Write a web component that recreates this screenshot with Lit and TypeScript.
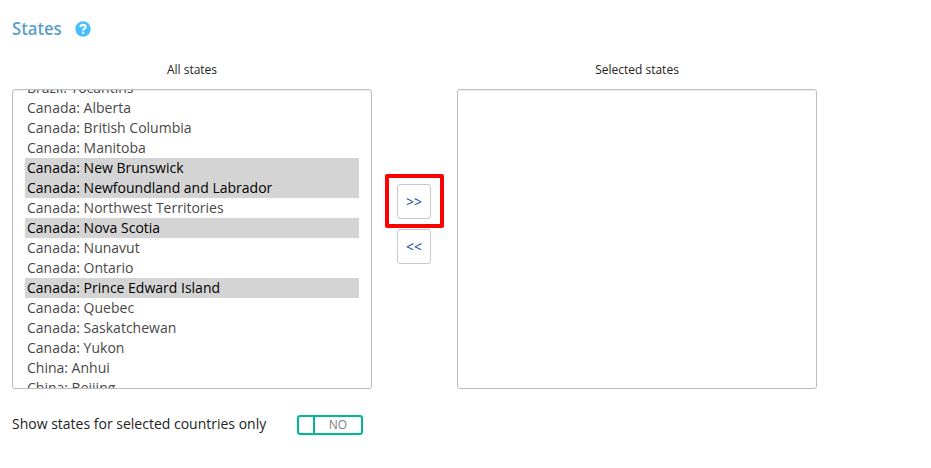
import { LitElement, html, css } from "lit";
import { customElement } from "lit/decorators.js";

const states: [string, boolean][] = [
  ["Brazil: Tocantins", false], ["Canada: Alberta", false], ["Canada: British Columbia", false],
  ["Canada: Manitoba", false], ["Canada: New Brunswick", true], ["Canada: Newfoundland and Labrador", true],
  ["Canada: Northwest Territories", false], ["Canada: Nova Scotia", true], ["Canada: Nunavut", false],
  ["Canada: Ontario", false], ["Canada: Prince Edward Island", true], ["Canada: Quebec", false],
  ["Canada: Saskatchewan", false], ["Canada: Yukon", false], ["China: Anhui", false], ["China: Beijing", false],
];

@customElement("app-root")
class AppRoot extends LitElement {
  static styles = css`
    :host { display: block; box-sizing: border-box; width: 931px; height: 468px; overflow: hidden; background: #fff; padding: 15px 0 0 12px; font-family: "Open Sans", sans-serif; color: #222; font-size: 14px; }
    * { box-sizing: border-box; }
    .head { display: flex; align-items: center; height: 28px; }
    h2 { margin: 0; width: 63px; font-size: 18.5px; line-height: 26px; height: 28px; font-weight: 600; color: #5b9fca; transform: scaleX(0.9); transform-origin: left center; }
    .help { width: 16px; height: 16px; display: block; margin-top: -1px; }
    .picker { display: grid; grid-template-columns: 360px 85px 360px; grid-template-rows: 46px 300px; }
    .caption { text-align: center; font-size: 12px; line-height: 20px; padding-top: 17px; }
    .list { border: 1px solid #bdbdbd; border-radius: 3px; overflow: hidden; padding: 0 12px; box-shadow: inset 0 1px 1px #00000012; }
    .items { margin-top: -12px; }
    .item { height: 20px; line-height: 20px; padding-left: 2px; color: #484848; white-space: nowrap; }
    .on { background: #d4d4d4; color: #000; }
    .moves { display: flex; flex-direction: column; align-items: flex-start; padding: 85px 0 0 13px; }
    .frame { border: 4px solid #f00; width: 59px; height: 54px; padding: 6px 8px; border-radius: 2px; }
    button { display: block; width: 34px; height: 35px; padding: 0; border: 1px solid #c8c8c8; border-radius: 3px; background: #fff; color: #164a99; font: 500 14px "Open Sans", sans-serif; }
    .back { margin: 1px 0 0 12px; }
    .foot { display: flex; align-items: center; margin-top: 25px; height: 22px; }
    .label { width: 285px; margin-top: -3px; }
    .toggle { display: flex; width: 66px; height: 20px; border: 2px solid #00b796; border-radius: 3px; }
    .knob { width: 16px; border-right: 2px solid #00b796; }
    .no { flex: 1; text-align: center; font-size: 12px; line-height: 16px; color: #808080; }
  `;
  render() {
    return html`
      <div class="head"><h2>States</h2>
        <svg class="help" viewBox="0 0 16 16"><circle cx="8" cy="8" r="7.7" fill="#46beff"/><path d="M5.4 6.1C5.5 4.5 6.5 3.8 8 3.8S10.6 4.7 10.6 6C10.6 7.7 8.1 7.7 8.1 9.5" fill="none" stroke="#fff" stroke-width="2.2"/><path d="M7 10.7h2.2v2H7z" fill="#fff"/></svg>
      </div>
      <div class="picker">
        <div class="caption">All states</div><div></div><div class="caption">Selected states</div>
        <div class="list"><div class="items">${states.map(([n, on]) => html`<div class="item ${on ? "on" : ""}">${n}</div>`)}</div></div>
        <div class="moves"><div class="frame"><button>&gt;&gt;</button></div><button class="back">&lt;&lt;</button></div>
        <div class="list"></div>
      </div>
      <div class="foot"><span class="label">Show states for selected countries only</span><div class="toggle"><div class="knob"></div><div class="no">NO</div></div></div>`;
  }
}
